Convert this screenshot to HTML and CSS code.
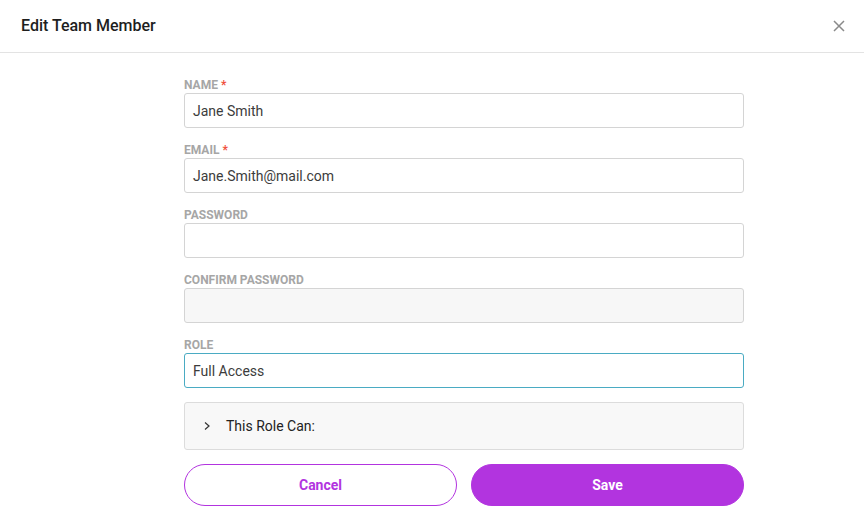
FILE: index.html
```html
<!DOCTYPE html>
<html>
<head>
<meta charset="utf-8">
<link rel="stylesheet" href="styles.css">
</head>
<body>
<div class="modal">
  <div class="header">
    <div class="title">Edit Team Member</div>
    <button class="close" aria-label="Close">
      <svg width="12" height="12" viewBox="0 0 12 12"><path d="M1 1L11 11M11 1L1 11" stroke="#8a8a8a" stroke-width="1.5" fill="none"/></svg>
    </button>
  </div>
  <div class="body">
    <form class="form">
      <div class="field">
        <label class="label">NAME <span class="req">*</span></label>
        <div class="input">Jane Smith</div>
      </div>
      <div class="field">
        <label class="label">EMAIL <span class="req">*</span></label>
        <div class="input">Jane.Smith@mail.com</div>
      </div>
      <div class="field">
        <label class="label">PASSWORD</label>
        <div class="input"></div>
      </div>
      <div class="field">
        <label class="label">CONFIRM PASSWORD</label>
        <div class="input disabled"></div>
      </div>
      <div class="field">
        <label class="label">ROLE</label>
        <div class="input focused">Full Access</div>
      </div>
      <div class="accordion">
        <svg class="chev" width="8" height="10" viewBox="0 0 8 10"><path d="M2 1.5L6 5L2 8.5" stroke="#333" stroke-width="1.2" fill="none"/></svg>
        <span>This Role Can:</span>
      </div>
      <div class="actions">
        <button type="button" class="btn cancel">Cancel</button>
        <button type="button" class="btn save">Save</button>
      </div>
    </form>
  </div>
</div>
</body>
</html>
```
FILE: styles.css
```css
* { box-sizing: border-box; }
html, body { margin: 0; padding: 0; background: #fff; }
body { font-family: Roboto, "Liberation Sans", sans-serif; color: #222; width: 864px; height: 516px; overflow: hidden; }
.header {
  height: 53px;
  border-bottom: 1px solid #e3e3e3;
  display: flex;
  align-items: center;
  justify-content: space-between;
  padding: 0 19px 1px 21px;
}
.title { font-size: 16px; font-weight: 500; color: #1e1e1e; }
.close { background: none; border: 0; padding: 0; width: 12px; height: 12px; display: flex; margin-top: 1px; }
.body { display: flex; justify-content: center; padding-top: 25px; padding-left: 64px; }
.form { width: 560px; display: flex; flex-direction: column; }
.field { display: flex; flex-direction: column; margin-bottom: 15px; }
.label { font-size: 12px; font-weight: 700; color: #a6a6a6; line-height: 15px; height: 15px; }
.req { color: #f0503c; }
.input {
  height: 35px;
  border: 1px solid #d4d4d4;
  border-radius: 3px;
  padding: 0 8px;
  font-size: 14px;
  color: #3c3c3c;
  display: flex;
  align-items: center;
}
.input.disabled { background: #f7f7f7; }
.input.focused { border-color: #4aabc3; }
.accordion {
  margin-top: -1px;
  height: 48px;
  background: #f8f8f8;
  border: 1px solid #dcdcdc;
  border-radius: 3px;
  display: flex;
  align-items: center;
  padding-left: 18px;
  font-size: 14px;
  color: #222;
}
.chev { margin-right: 15px; }
.actions { display: flex; gap: 14px; margin-top: 14px; }
.btn {
  flex: 1;
  height: 42px;
  border-radius: 21px;
  font-family: Roboto, "Liberation Sans", sans-serif;
  font-size: 14px;
  font-weight: 700;
  border: 1px solid #b234df;
}
.cancel { background: #fff; color: #b234df; }
.save { background: #b234df; color: #fff; }
```
